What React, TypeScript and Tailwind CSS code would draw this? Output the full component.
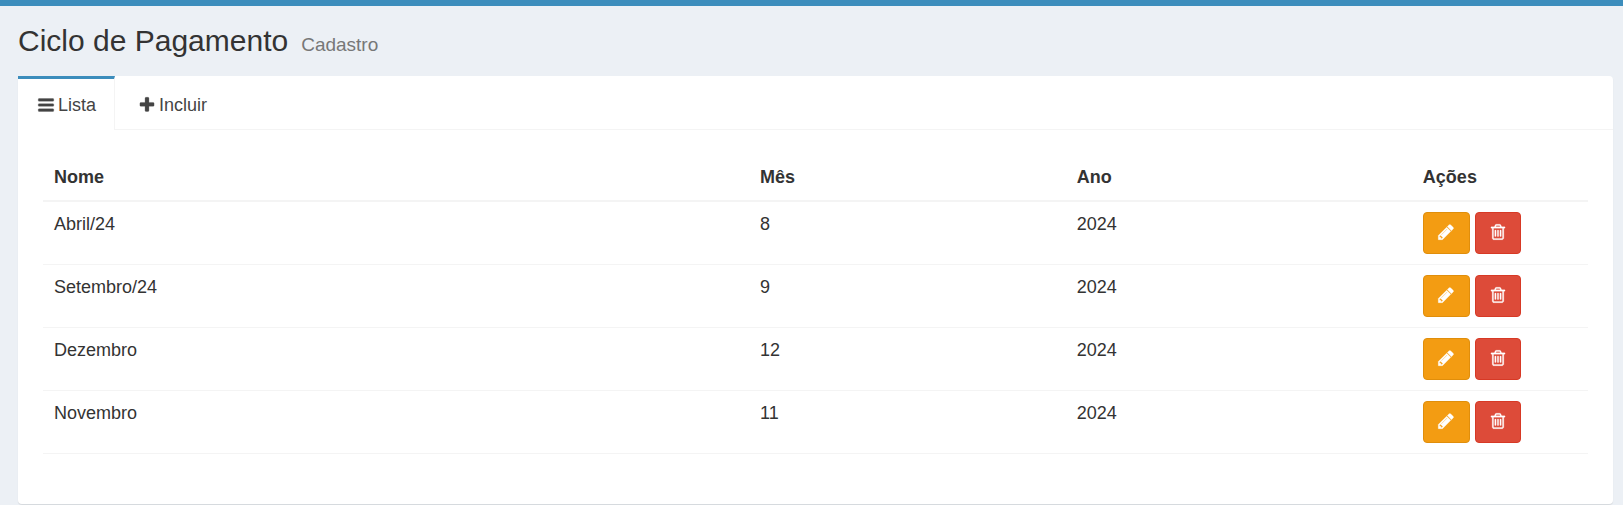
import React from "react";

type IconProps = { d: string };

function Icon({ d }: IconProps) {
  return (
    <svg
      viewBox="0 0 1792 1792"
      className="mb-[2px] size-[18px] shrink-0 overflow-visible fill-current stroke-current"
      strokeWidth="28"
      aria-hidden="true"
    >
      <path d={d} />
    </svg>
  );
}

const icons = {
  bars: "M1664 1344v128q0 26-19 45t-45 19h-1408q-26 0-45-19t-19-45v-128q0-26 19-45t45-19h1408q26 0 45 19t19 45zm0-512v128q0 26-19 45t-45 19h-1408q-26 0-45-19t-19-45v-128q0-26 19-45t45-19h1408q26 0 45 19t19 45zm0-512v128q0 26-19 45t-45 19h-1408q-26 0-45-19t-19-45v-128q0-26 19-45t45-19h1408q26 0 45 19t19 45z",
  plus: "M1600 736v192q0 40-28 68t-68 28h-416v416q0 40-28 68t-68 28h-192q-40 0-68-28t-28-68v-416h-416q-40 0-68-28t-28-68v-192q0-40 28-68t68-28h416v-416q0-40 28-68t68-28h192q40 0 68 28t28 68v416h416q40 0 68 28t28 68z",
  pencil:
    "M491 1536l91-91-235-235-91 91v107h128v128h107zm523-928q0-22-22-22-10 0-17 7l-542 542q-7 7-7 17 0 22 22 22 10 0 17-7l542-542q7-7 7-17zm-54-192l416 416-832 832h-416v-416zm683 96q0 53-37 90l-166 166-416-416 166-165q36-38 90-38 53 0 91 38l235 234q37 39 37 91z",
  trash:
    "M704 736v576q0 14-9 23t-23 9h-64q-14 0-23-9t-9-23v-576q0-14 9-23t23-9h64q14 0 23 9t9 23zm256 0v576q0 14-9 23t-23 9h-64q-14 0-23-9t-9-23v-576q0-14 9-23t23-9h64q14 0 23 9t9 23zm256 0v576q0 14-9 23t-23 9h-64q-14 0-23-9t-9-23v-576q0-14 9-23t23-9h64q14 0 23 9t9 23zm128 724v-948h-896v948q0 22 7 40.5t14.5 27 10.5 8.5h832q3 0 10.5-8.5t14.5-27 7-40.5zm-672-1076h448l-48-117q-7-9-17-11h-317q-10 2-17 11zm928 32v64q0 14-9 23t-23 9h-96v948q0 83-47 143.5t-113 60.5h-832q-66 0-113-58.5t-47-141.5v-952h-96q-14 0-23-9t-9-23v-64q0-14 9-23t23-9h309l70-167q15-37 54-63t79-26h320q40 0 79 26t54 63l70 167h309q14 0 23 9t9 23z",
};

const cycles = [
  { name: "Abril/24", month: 8, year: 2024 },
  { name: "Setembro/24", month: 9, year: 2024 },
  { name: "Dezembro", month: 12, year: 2024 },
  { name: "Novembro", month: 11, year: 2024 },
];

export default function App() {
  return (
    <div className="min-h-screen border-t-6 border-[#3c8dbc] bg-[#ecf0f5] font-['Liberation_Sans',Arial,sans-serif] text-[18px] leading-[25px] text-[#333]">
      <header className="flex items-baseline gap-[13px] px-[18px] pt-[18px] pb-[19px]">
        <h1 className="text-[30px] leading-[33px]">Ciclo de Pagamento</h1>
        <small className="text-[19px] leading-[19px] text-[#777]">Cadastro</small>
      </header>

      <main className="mr-[10px] ml-[18px] rounded-[4px] bg-white shadow-[0_1px_1px_rgba(0,0,0,0.1)]">
        <nav>
          <ul className="flex text-[#444]">
            <li className="border-t-3 border-r border-t-[#3c8dbc] border-r-[#f4f4f4] bg-white">
              <a href="#lista" aria-current="page" className="flex items-center gap-[3px] pt-[14px] pr-[18px] pb-3 pl-[19px]">
                <Icon d={icons.bars} />
                Lista
              </a>
            </li>
            <li className="flex-1 border-t-3 border-b border-t-transparent border-b-[#f4f4f4]">
              <a href="#incluir" className="ml-1 inline-flex items-center gap-[3px] pt-[14px] pr-[18px] pb-[11px] pl-[19px]">
                <Icon d={icons.plus} />
                Incluir
              </a>
            </li>
          </ul>
        </nav>

        <section className="px-[25px] pt-[25px] pb-[50px]">
          <table className="w-full table-fixed border-collapse text-left">
            <thead>
              <tr className="border-b-2 border-[#f4f4f4]">
                <th className="w-[45.7%] px-[11px] py-[10px]">Nome</th>
                <th className="w-[20.5%] px-[11px] py-[10px]">Mês</th>
                <th className="w-[22.4%] px-[11px] py-[10px]">Ano</th>
                <th className="px-[11px] py-[10px]">Ações</th>
              </tr>
            </thead>
            <tbody>
              {cycles.map((cycle) => (
                <tr key={cycle.name} className="border-b border-[#f4f4f4] align-top">
                  <td className="px-[11px] py-[10px]">{cycle.name}</td>
                  <td className="px-[11px] py-[10px]">{cycle.month}</td>
                  <td className="px-[11px] py-[10px]">{cycle.year}</td>
                  <td className="px-[11px] py-[10px]">
                    <div className="flex gap-[5px]">
                      <button
                        type="button"
                        aria-label="Editar"
                        className="flex h-[42px] w-[47px] items-center justify-center rounded-[4px] border border-[#e08e0b] bg-[#f39c12] text-white"
                      >
                        <Icon d={icons.pencil} />
                      </button>
                      <button
                        type="button"
                        aria-label="Excluir"
                        className="flex h-[42px] w-[46px] items-center justify-center rounded-[4px] border border-[#d73925] bg-[#dd4b39] text-white"
                      >
                        <Icon d={icons.trash} />
                      </button>
                    </div>
                  </td>
                </tr>
              ))}
            </tbody>
          </table>
        </section>
      </main>
    </div>
  );
}
